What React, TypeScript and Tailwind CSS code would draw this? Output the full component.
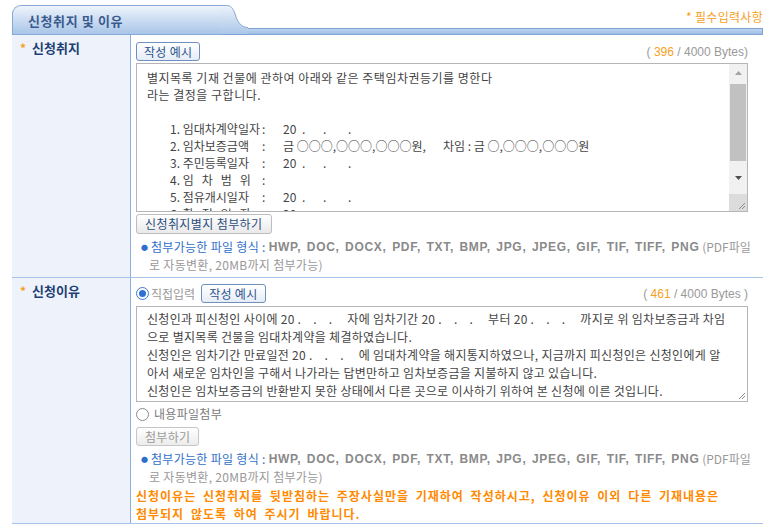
import type { ReactNode } from 'react'

const grayBold = "font-['Liberation_Sans',sans-serif] font-bold tracking-[0.7px] [word-spacing:1.5px] text-[#8a8a8a]"

function Btn({ children, className = '' }: { children: ReactNode; className?: string }) {
    return (
        <button
            type="button"
            className={
                'h-[19px] rounded-[3px] border bg-linear-to-b px-[7px] text-[12px] leading-[16px] tracking-[0.3px] ' +
                className
            }
        >
            {children}
        </button>
    )
}

function Radio({ checked }: { checked?: boolean }) {
    if (checked) {
        return (
            <span className="flex h-[13px] w-[13px] items-center justify-center rounded-full border border-[#3b78d6] bg-white">
                <span className="h-[7px] w-[7px] rounded-full bg-[#2f6fd6]" />
            </span>
        )
    }
    return <span className="h-[13px] w-[13px] rounded-full border border-[#8a8a8a] bg-white" />
}

function FileTypes() {
    return (
        <div className="text-[12px] leading-[18px]">
            <div className="flex items-center whitespace-pre pl-[5px]">
                <span className="mr-[3px] text-[7px] text-[#2f6fc9]">●</span>
                <span className="tracking-[0.3px] text-[#2f6fc9]">첨부가능한 파일 형식 : </span>
                <span className={grayBold}>HWP, DOC, DOCX, PDF, TXT, BMP, JPG, JPEG, GIF, TIF, TIFF, PNG</span>
                <span className="text-[#999]"> (PDF파일</span>
            </div>
            <div className="pl-[13px] tracking-[0.3px] text-[#999]">로 자동변환, 20MB까지 첨부가능)</div>
        </div>
    )
}

function Resize() {
    return (
        <svg width="10" height="10" viewBox="0 0 10 10" className="text-[#8a8a8a]">
            <path d="M9 3 L3 9 M9 6 L6 9" stroke="currentColor" strokeWidth="1" />
        </svg>
    )
}

function Counter({ n, close }: { n: string; close: string }) {
    return (
        <span className="whitespace-pre font-['Liberation_Sans',sans-serif] text-[12px] text-[#999]">
            ( <span className="text-[#f5a01f]">{n}</span> / 4000 Bytes{close}
        </span>
    )
}

function Label({ children }: { children: ReactNode }) {
    return (
        <div className="flex items-start bg-[#eef3fb] pl-[8px] pt-[4px] text-[13px] font-bold leading-[18px] text-[#1f3f74]">
            <span className="mr-[6px] text-[12px] text-[#f5a01f]">*</span>
            {children}
        </div>
    )
}

function DateDots() {
    return (
        <span className="flex">
            <span className="w-[19px]">20</span>
            <span className="w-[21px]">.</span>
            <span className="w-[25px]">.</span>
            <span>.</span>
        </span>
    )
}

function Item({ label, children }: { label: ReactNode; children?: ReactNode }) {
    return (
        <div className="flex whitespace-pre pl-[23px] tracking-normal">
            <span className="w-[92px]">{label}</span>
            <span className="w-[21px]">:</span>
            {children}
        </div>
    )
}

export default function App() {
    return (
        <div className="h-[528px] w-[773px] overflow-hidden bg-white font-['Noto_Sans_CJK_KR',sans-serif] text-[12px] text-[#444]">
            {/* header tab */}
            <div className="flex w-[763px] items-end pl-[12px] pt-[5px]">
                <div className="flex h-[30px] w-[208px] items-center rounded-tl-[9px] border-b border-l border-t border-[#86a9d6] bg-linear-to-b from-[#eef4fb] to-[#a9c5e8] pl-[15px] pt-[2px] text-[13px] font-bold tracking-[0.6px] text-[#3a5a8d]">
                    신청취지 및 이유
                </div>
                <svg width="28" height="30" viewBox="0 0 28 30" className="block shrink-0">
                    <defs>
                        <linearGradient id="tabg" x1="0" y1="0" x2="0" y2="30" gradientUnits="userSpaceOnUse">
                            <stop offset="0" stopColor="#eef4fb" />
                            <stop offset="1" stopColor="#a9c5e8" />
                        </linearGradient>
                    </defs>
                    <path d="M0 0.5 H6 C11 0.5 13 3 15 9 C17.5 17 21 22.5 28 22.5 V29.5 H0 Z" fill="url(#tabg)" />
                    <path d="M0 0.5 H6 C11 0.5 13 3 15 9 C17.5 17 21 22.5 28 22.5" fill="none" stroke="#86a9d6" />
                    <path d="M0 29.5 H28" stroke="#7ea2d3" />
                </svg>
                <div className="flex flex-1 flex-col">
                    <div className="mb-[3px] text-right text-[12px] leading-[16px] tracking-[0.3px] text-[#f5a01f]">* 필수입력사항</div>
                    <div className="h-[7px] border-b border-r border-t border-[#7ea2d3] bg-linear-to-b from-[#bcd2ef] to-[#a0bfe6]" />
                </div>
            </div>

            {/* table */}
            <div className="ml-[12px] grid w-[751px] grid-cols-[118px_minmax(0,1fr)]">
                {/* row 1 */}
                <Label>신청취지</Label>
                <div className="min-w-0 border-l border-[#8daee2] pb-[3px] pl-[5px] pr-[15px] pt-[7px]">
                    <div className="flex items-center justify-between">
                        <Btn className="border-[#6f8fbd] from-white to-[#e6edf6] text-[#2d558f]">작성 예시</Btn>
                        <Counter n="396" close=")" />
                    </div>
                    <div className="mt-[2px] flex h-[149px] border border-[#b5b5b5] bg-white">
                        <div className="min-w-0 flex-1 overflow-hidden pl-[10px] pt-[5px] leading-[17px] tracking-[0.5px] text-[#444]">
                            <div>별지목록 기재 건물에 관하여 아래와 같은 주택임차권등기를 명한다</div>
                            <div>라는 결정을 구합니다.</div>
                            <div>&nbsp;</div>
                            <Item label="1. 임대차계약일자">
                                <DateDots />
                            </Item>
                            <Item label="2. 임차보증금액">
                                <span className="w-[160px]">금 ○○○,○○○,○○○원,</span>
                                <span>차임 : 금 ○,○○○,○○○원</span>
                            </Item>
                            <Item label="3. 주민등록일자">
                                <DateDots />
                            </Item>
                            <Item
                                label={
                                    <>
                                        4. <span className="tracking-[8px]">임차범위</span>
                                    </>
                                }
                            />
                            <Item label="5. 점유개시일자">
                                <DateDots />
                            </Item>
                            <Item
                                label={
                                    <>
                                        6. <span className="tracking-[8px]">확정일자</span>
                                    </>
                                }
                            >
                                <DateDots />
                            </Item>
                        </div>
                        <div className="flex w-[18px] shrink-0 flex-col bg-[#f1f1f1]">
                            <div className="flex h-[18px] items-center justify-center">
                                <svg width="7" height="4" viewBox="0 0 7 4">
                                    <path d="M0 4 L3.5 0 L7 4 Z" fill="#a3a3a3" />
                                </svg>
                            </div>
                            <div className="mx-[1px] mt-[2px] h-[77px] bg-[#c1c1c1]" />
                            <div className="flex flex-1 items-center justify-center">
                                <svg width="7" height="4" viewBox="0 0 7 4">
                                    <path d="M0 0 L7 0 L3.5 4 Z" fill="#505050" />
                                </svg>
                            </div>
                            <div className="flex h-[17px] items-end justify-end bg-[#dcdcdc] pb-[1px] pr-[1px]">
                                <Resize />
                            </div>
                        </div>
                    </div>
                    <button
                        type="button"
                        className="mt-[2px] h-[20px] rounded-[3px] border border-[#bdbdbd] bg-linear-to-b from-white to-[#e9e9e9] px-[8px] text-[12px] leading-[16px] tracking-[0.4px] text-[#2c4f80]"
                    >
                        신청취지별지 첨부하기
                    </button>
                    <div className="mt-[4px]">
                        <FileTypes />
                    </div>
                </div>

                {/* row 2 */}
                <div className="col-span-2 h-px bg-[#a8c3ea]" />
                <Label>신청이유</Label>
                <div className="min-w-0 border-l border-[#8daee2] pl-[5px] pr-[15px] pt-[6px]">
                    <div className="flex items-center justify-between">
                        <div className="flex items-center">
                            <Radio checked />
                            <span className="ml-[2px] mr-[6px] text-[#9a9a9a]">직접입력</span>
                            <Btn className="border-[#6f8fbd] from-white to-[#e6edf6] text-[#2d558f]">작성 예시</Btn>
                        </div>
                        <Counter n="461" close=" )" />
                    </div>
                    <div className="mt-[3px] flex h-[96px] border border-[#b5b5b5] bg-white">
                        <div className="min-w-0 flex-1 overflow-hidden whitespace-pre pl-[10px] pt-[3px] leading-[18px] tracking-[0.3px] text-[#444]">
                            <div>신청인과 피신청인 사이에 20 .    .    .     자에 임차기간 20 .    .    .     부터 20 .    .    .     까지로 위 임차보증금과 차임</div>
                            <div>으로 별지목록 건물을 임대차계약을 체결하였습니다.</div>
                            <div>신청인은 임차기간 만료일전 20 .    .    .     에 임대차계약을 해지통지하였으나, 지금까지 피신청인은 신청인에게 알</div>
                            <div>아서 새로운 임차인을 구해서 나가라는 답변만하고 임차보증금을 지불하지 않고 있습니다.</div>
                            <div>신청인은 임차보증금의 반환받지 못한 상태에서 다른 곳으로 이사하기 위하여 본 신청에 이른 것입니다.</div>
                        </div>
                        <div className="flex w-[12px] shrink-0 items-end justify-end pb-[1px] pr-[1px]">
                            <Resize />
                        </div>
                    </div>
                    <div className="mt-[4px] flex h-[16px] items-center">
                        <Radio />
                        <span className="ml-[5px] tracking-[0.3px] text-[#7a7a7a]">내용파일첨부</span>
                    </div>
                    <button
                        type="button"
                        className="mt-[5px] h-[19px] rounded-[3px] border border-[#c6c6c6] bg-linear-to-b from-white to-[#ececec] px-[8px] text-[12px] leading-[16px] tracking-[0.3px] text-[#9a9a9a]"
                    >
                        첨부하기
                    </button>
                    <div className="mt-[4px]">
                        <FileTypes />
                    </div>
                    <div className="pt-[1px] text-[12px] font-bold leading-[18px] tracking-[1px] text-[#ff8a00] [word-spacing:3px]">
                        <div>신청이유는 신청취지를 뒷받침하는 주장사실만을 기재하여 작성하시고, 신청이유 이외 다른 기재내용은</div>
                        <div>첨부되지 않도록 하여 주시기 바랍니다.</div>
                    </div>
                </div>
                <div className="col-span-2 h-px bg-[#a8c3ea]" />
            </div>
        </div>
    )
}
